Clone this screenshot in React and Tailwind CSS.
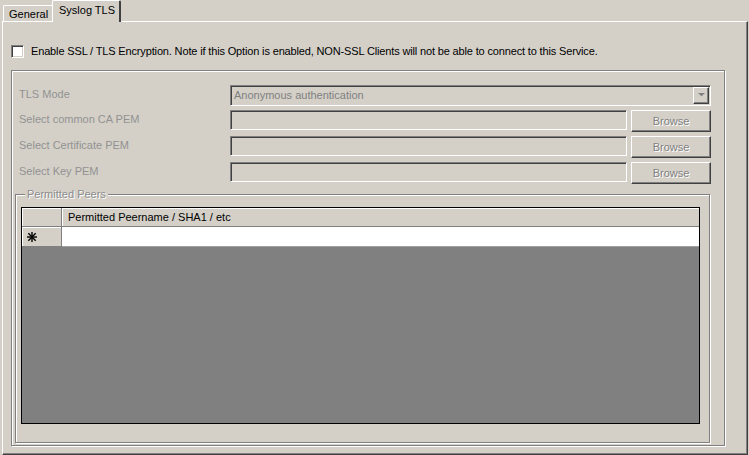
const raised =
  'border border-t-white border-l-white border-r-[#404040] border-b-[#404040] shadow-[inset_-1px_-1px_0_#808080]';
const sunken =
  'border border-t-[#808080] border-l-[#808080] border-r-white border-b-white shadow-[inset_1px_1px_0_#404040,inset_-1px_-1px_0_#d4d0c8]';
const etched = 'border border-[#808080] shadow-[1px_1px_0_#fff,inset_1px_1px_0_#fff]';

function Row({ label, first, children }) {
  return (
    <div className={`flex items-start h-[22px] ${first ? 'mb-[3px]' : 'mb-[4px]'}`}>
      <div className="w-[218px] pl-[7px] pt-[3px] text-[#929292]">{label}</div>
      {children}
    </div>
  );
}

function PemRow({ label }) {
  return (
    <Row label={label}>
      <div className={`w-[397px] h-[20px] bg-[#d4d0c8] ${sunken}`} />
      <button
        disabled
        className={`ml-[4px] w-[80px] h-[22px] bg-[#d4d0c8] text-[#808080] [text-shadow:1px_1px_0_#fff] ${raised}`}
      >
        Browse
      </button>
    </Row>
  );
}

function Asterisk() {
  return (
    <svg width="10" height="10" viewBox="0 0 10 10" className="block">
      <g stroke="#000" strokeWidth="1.4" strokeLinecap="square">
        <line x1="5" y1="0.5" x2="5" y2="9.5" />
        <line x1="0.5" y1="5" x2="9.5" y2="5" />
        <line x1="1.8" y1="1.8" x2="8.2" y2="8.2" />
        <line x1="8.2" y1="1.8" x2="1.8" y2="8.2" />
      </g>
    </svg>
  );
}

export default function App() {
  return (
    <div className="w-[749px] h-[455px] bg-[#d4d0c8] overflow-hidden text-[11px] leading-[13px] text-black font-['Liberation_Sans',Arial,sans-serif]">
      {/* tab strip */}
      <div className="flex items-end h-[21px] pl-[3px] relative z-10">
        <div className="w-[49px] h-[16px] border-l border-t border-white rounded-tl-[2px] pl-[5px] pt-[2px]">
          General
        </div>
        <div className="w-[69px] h-[22px] -mb-px bg-[#d4d0c8] border-l border-t border-white border-r-2 border-r-[#404040] rounded-t-[2px] pl-[6px] pt-[3px]">
          Syslog TLS
        </div>
      </div>

      {/* tab page */}
      <div className="ml-[2px] w-[746px] h-[434px] border border-t-white border-l-white border-r-[#404040] border-b-[#404040] shadow-[inset_-1px_-1px_0_#808080]">
        <div className="flex items-center mt-[23px] ml-[8px] h-[13px]">
          <div className={`w-[13px] h-[13px] bg-white ${sunken}`} />
          <span className="ml-[7px] tracking-[-0.15px]">
            Enable SSL / TLS Encryption. Note if this Option is enabled, NON-SSL Clients will not be able to connect to this Service.
          </span>
        </div>

        <div className={`mt-[12px] ml-[8px] w-[714px] h-[376px] ${etched}`}>
          <div className="pt-[14px]">
            <Row label="TLS Mode" first>
              <div className={`w-[481px] h-[21px] bg-[#d4d0c8] flex items-center justify-between pl-[3px] pr-[1px] ${sunken}`}>
                <span className="text-[#808080]">Anonymous authentication</span>
                <div className={`w-[16px] h-[17px] flex items-center justify-center ${raised}`}>
                  <svg width="7" height="5" viewBox="0 0 7 5">
                    <path d="M1 1 H6 L3.5 3.5 Z" fill="#fff" />
                    <path d="M0 0 H7 L3.5 3.5 Z" fill="#808080" />
                  </svg>
                </div>
              </div>
            </Row>
            <PemRow label="Select common CA PEM" />
            <PemRow label="Select Certificate PEM" />
            <PemRow label="Select Key PEM" />
          </div>

          {/* Permitted Peers group */}
          <div className={`relative mt-[10px] ml-[3px] w-[695px] h-[249px] ${etched}`}>
            <span className="absolute -top-[7px] left-[9px] px-[2px] bg-[#d4d0c8] text-[#8c8c8c] [text-shadow:1px_1px_0_#fff]">
              Permitted Peers
            </span>
            <div className="mt-[12px] ml-[5px] w-[679px] h-[217px] border border-black bg-[#808080]">
              <div className="flex h-[19px] bg-[#d4d0c8]">
                <div className="w-[40px] border-r border-b border-[#808080] shadow-[inset_1px_1px_0_#fff]" />
                <div className="flex-1 border-b border-[#808080] shadow-[inset_1px_1px_0_#fff] pl-[6px] pt-[3px]">
                  Permitted Peername / SHA1 / etc
                </div>
              </div>
              <div className="flex h-[20px]">
                <div className="w-[40px] bg-[#d4d0c8] border-r border-b border-[#808080] shadow-[inset_1px_1px_0_#fff] flex items-center pl-[5px]">
                  <Asterisk />
                </div>
                <div className="flex-1 bg-white border-b border-[#a0a0a0]" />
              </div>
            </div>
          </div>
        </div>
      </div>
    </div>
  );
}
